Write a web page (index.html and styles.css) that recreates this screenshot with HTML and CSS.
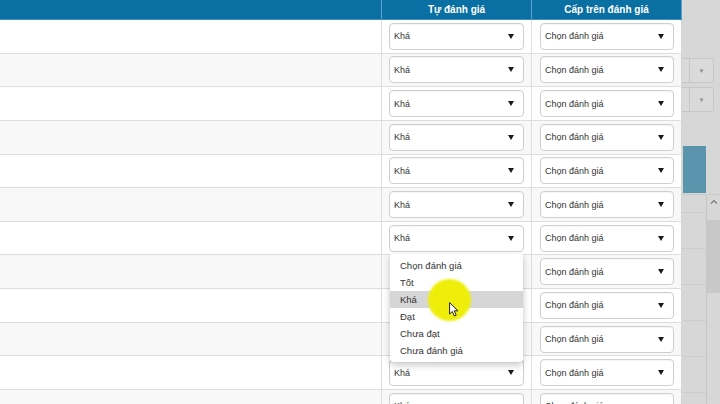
FILE: index.html
```html
<!DOCTYPE html>
<html lang="vi">
<head>
<meta charset="utf-8">
<title>Đánh giá</title>
<link rel="stylesheet" href="styles.css">
</head>
<body>
<div class="page">
  <div class="table">
    <div class="thead">
      <div class="c1 th"></div>
      <div class="c2 th">Tự đánh giá</div>
      <div class="c3 th">Cấp trên đánh giá</div>
    </div>
    <div class="tbody">
      <div class="row"><div class="c1"></div><div class="c2"><div class="select"><span>Khá</span><i class="caret"></i></div></div><div class="c3"><div class="select"><span>Chọn đánh giá</span><i class="caret"></i></div></div></div>
      <div class="row"><div class="c1"></div><div class="c2"><div class="select"><span>Khá</span><i class="caret"></i></div></div><div class="c3"><div class="select"><span>Chọn đánh giá</span><i class="caret"></i></div></div></div>
      <div class="row"><div class="c1"></div><div class="c2"><div class="select"><span>Khá</span><i class="caret"></i></div></div><div class="c3"><div class="select"><span>Chọn đánh giá</span><i class="caret"></i></div></div></div>
      <div class="row"><div class="c1"></div><div class="c2"><div class="select"><span>Khá</span><i class="caret"></i></div></div><div class="c3"><div class="select"><span>Chọn đánh giá</span><i class="caret"></i></div></div></div>
      <div class="row"><div class="c1"></div><div class="c2"><div class="select"><span>Khá</span><i class="caret"></i></div></div><div class="c3"><div class="select"><span>Chọn đánh giá</span><i class="caret"></i></div></div></div>
      <div class="row"><div class="c1"></div><div class="c2"><div class="select"><span>Khá</span><i class="caret"></i></div></div><div class="c3"><div class="select"><span>Chọn đánh giá</span><i class="caret"></i></div></div></div>
      <div class="row"><div class="c1"></div><div class="c2"><div class="select open"><span>Khá</span><i class="caret"></i>
        <ul class="dropdown">
          <li>Chọn đánh giá</li>
          <li>Tốt</li>
          <li class="active">Khá</li>
          <li>Đạt</li>
          <li>Chưa đạt</li>
          <li>Chưa đánh giá</li>
        </ul>
      </div></div><div class="c3"><div class="select"><span>Chọn đánh giá</span><i class="caret"></i></div></div></div>
      <div class="row"><div class="c1"></div><div class="c2"><div class="select covered"><span>Khá</span><i class="caret"></i></div></div><div class="c3"><div class="select"><span>Chọn đánh giá</span><i class="caret"></i></div></div></div>
      <div class="row"><div class="c1"></div><div class="c2"><div class="select covered"><span>Khá</span><i class="caret"></i></div></div><div class="c3"><div class="select"><span>Chọn đánh giá</span><i class="caret"></i></div></div></div>
      <div class="row"><div class="c1"></div><div class="c2"><div class="select covered"><span>Khá</span><i class="caret"></i></div></div><div class="c3"><div class="select"><span>Chọn đánh giá</span><i class="caret"></i></div></div></div>
      <div class="row"><div class="c1"></div><div class="c2"><div class="select"><span>Khá</span><i class="caret"></i></div></div><div class="c3"><div class="select"><span>Chọn đánh giá</span><i class="caret"></i></div></div></div>
      <div class="row"><div class="c1"></div><div class="c2"><div class="select"><span>Khá</span><i class="caret"></i></div></div><div class="c3"><div class="select"><span>Chọn đánh giá</span><i class="caret"></i></div></div></div>
    </div>
  </div>
  <div class="side">
    <div class="side-selects">
      <div class="side-select"><div class="seg"></div><div class="side-arrow">▼</div></div>
      <div class="side-select"><div class="seg"></div><div class="side-arrow">▼</div></div>
    </div>
    <div class="side-blue"></div>
    <div class="side-lower">
      <div class="lower-left">
        <div class="ll-first"></div>
        <div class="ll-row"></div>
        <div class="ll-row"></div>
        <div class="ll-row"></div>
        <div class="ll-row"></div>
        <div class="ll-row"></div>
      </div>
      <div class="scroll">
        <div class="scroll-up">
          <svg width="8" height="5" viewBox="0 0 8 5"><path d="M1 4.5 L4 1.5 L7 4.5" fill="none" stroke="#7a7a7a" stroke-width="1.2"/></svg>
        </div>
        <div class="thumb"></div>
      </div>
    </div>
  </div>
  <div class="spot"></div>
  <svg class="cursor" width="10" height="15" viewBox="0 0 12 18"><path d="M0.7 0.7 L0.7 14.5 L4 11.4 L6.4 16.8 L8.6 15.8 L6.3 10.6 L10.8 10.6 Z" fill="#fff" stroke="#111" stroke-width="1.1" stroke-linejoin="round"/></svg>
</div>
</body>
</html>
```
FILE: styles.css
```css
* { box-sizing: border-box; }
html, body { margin: 0; padding: 0; }
body {
  width: 720px;
  height: 404px;
  overflow: hidden;
  background: #d7d7d7;
  font-family: "Liberation Sans", Arial, sans-serif;
  font-size: 9px;
  color: #333;
}
.page {
  position: relative;
  display: flex;
  width: 720px;
  height: 404px;
}
.table {
  width: 682px;
  flex: none;
  background: #fff;
}
.thead {
  display: flex;
  height: 20px;
  background: #0a6fa3;
  border-bottom: 1px solid #3d8fbd;
}
.th {
  color: #fff;
  font-weight: bold;
  font-size: 10px;
  display: flex;
  align-items: center;
  justify-content: center;
  border-right: 1px solid #5fa3cc;
}
.c1 { width: 382px; flex: none; border-right: 1px solid #dedede; }
.c2 { width: 150px; flex: none; border-right: 1px solid #dedede; padding: 0 7px; display: flex; align-items: center; }
.c3 { width: 150px; flex: none; border-right: 1px solid #d4d4d4; padding: 0 7px 0 8px; display: flex; align-items: center; }
.thead .c1, .thead .c2, .thead .c3 { border-right-color: #5fa3cc; padding: 0; justify-content: center; }
.row {
  display: flex;
  height: 33.65px;
  border-bottom: 1px solid #dddddd;
  background: #fff;
}
.row:nth-child(even) { background: #f8f8f8; }
.select {
  position: relative;
  width: 100%;
  height: 27px;
  background: #fff;
  border: 1px solid #cfcfcf;
  border-radius: 4px;
  display: flex;
  align-items: center;
  justify-content: space-between;
  padding: 0 9px 0 4px;
  color: #333;
  box-shadow: inset 0 1px 1px rgba(0,0,0,0.04);
}
.select.covered { visibility: hidden; }
.caret {
  width: 0;
  height: 0;
  border-left: 3px solid transparent;
  border-right: 3px solid transparent;
  border-top: 5px solid #1a1a1a;
}
.dropdown {
  position: absolute;
  top: 28px;
  left: 0;
  width: 133px;
  margin: 0;
  padding: 3px 0 3px;
  list-style: none;
  background: #fff;
  border-radius: 0 0 4px 4px;
  box-shadow: 0 3px 7px rgba(0,0,0,0.22), 0 0 1px rgba(0,0,0,0.15);
  z-index: 5;
}
.dropdown li {
  height: 17px;
  line-height: 17px;
  padding-left: 10px;
  color: #333;
  font-size: 9.5px;
}
.dropdown li.active { background: #d6d6d6; }
.side {
  flex: 1;
  display: flex;
  flex-direction: column;
  background: #d7d7d7;
}
.side-selects {
  margin-top: 58px;
  display: flex;
  flex-direction: column;
  gap: 4px;
}
.side-select {
  width: 32px;
  height: 25px;
  display: flex;
  background: #dadada;
  border: 1px solid #c7c7c7;
  border-left: none;
  border-radius: 0 3px 3px 0;
}
.seg { width: 8px; border-right: 1px solid #c7c7c7; }
.side-arrow {
  flex: 1;
  display: flex;
  align-items: center;
  justify-content: center;
  font-size: 6px;
  color: #8a8a8a;
}
.side-blue {
  margin-top: 34px;
  margin-left: 1px;
  width: 23px;
  height: 47px;
  background: #5a95ad;
}
.side-lower {
  margin-top: 1px;
  flex: 1;
  display: flex;
  border-top: 1px solid #cacaca;
}
.lower-left {
  width: 25px;
  border-right: 1px solid #c6c6c6;
  display: flex;
  flex-direction: column;
}
.ll-first { height: 18px; border-bottom: 1px solid #cdcdcd; }
.ll-row { height: 36px; border-bottom: 1px solid #cdcdcd; }
.scroll {
  flex: 1;
  display: flex;
  flex-direction: column;
}
.scroll-up {
  height: 25px;
  display: flex;
  justify-content: center;
  padding-top: 4px;
}
.thumb {
  height: 73px;
  background: #c8c8c8;
}
.spot {
  position: absolute;
  left: 428px;
  top: 279px;
  width: 43px;
  height: 42px;
  border-radius: 50%;
  background: #eeee0a;
  filter: blur(0.8px);
  z-index: 10;
}
.cursor {
  position: absolute;
  left: 449px;
  top: 302px;
  z-index: 11;
}
```
